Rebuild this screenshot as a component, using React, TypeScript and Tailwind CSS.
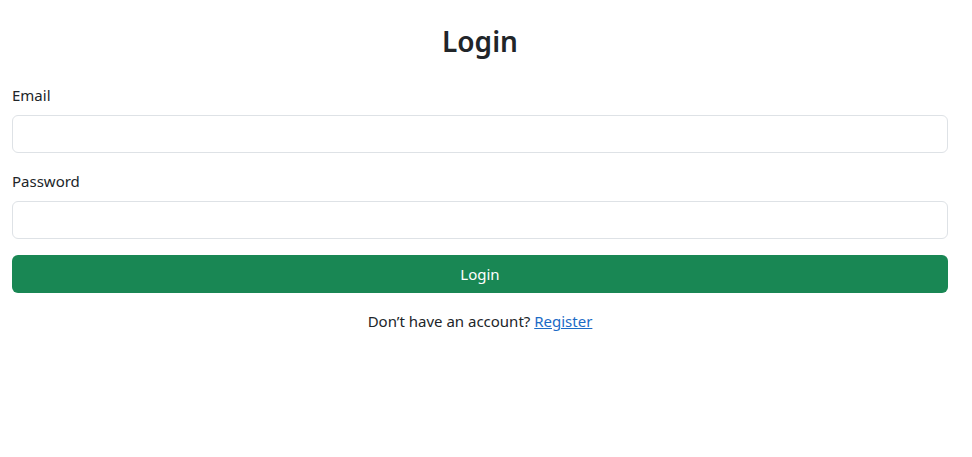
export default function App() {
  return (
    <div
      className="w-full bg-white text-[#212529] pl-3 pr-6 pt-[23px]"
      style={{ fontFamily: '"Noto Sans", "Open Sans", sans-serif' }}
    >
      <h2 className="text-center text-[28px] font-semibold leading-[36px] mb-6">Login</h2>
      <form className="flex flex-col">
        <label className="text-[15px] leading-6 mb-2">Email</label>
        <input
          type="email"
          className="h-[38px] w-full rounded-[6px] border border-[#dee2e6] px-3 mb-4 outline-none"
        />
        <label className="text-[15px] leading-6 mb-2">Password</label>
        <input
          type="password"
          className="h-[38px] w-full rounded-[6px] border border-[#dee2e6] px-3 mb-4 outline-none"
        />
        <button
          type="button"
          className="h-[38px] w-full rounded-[6px] bg-[#198754] text-white text-[15px] leading-6"
        >
          Login
        </button>
      </form>
      <p className="text-center text-[15px] leading-6 mt-4">
        Don’t have an account?{" "}
        <a href="#" className="text-[#1c6bc6] underline">
          Register
        </a>
      </p>
    </div>
  );
}
